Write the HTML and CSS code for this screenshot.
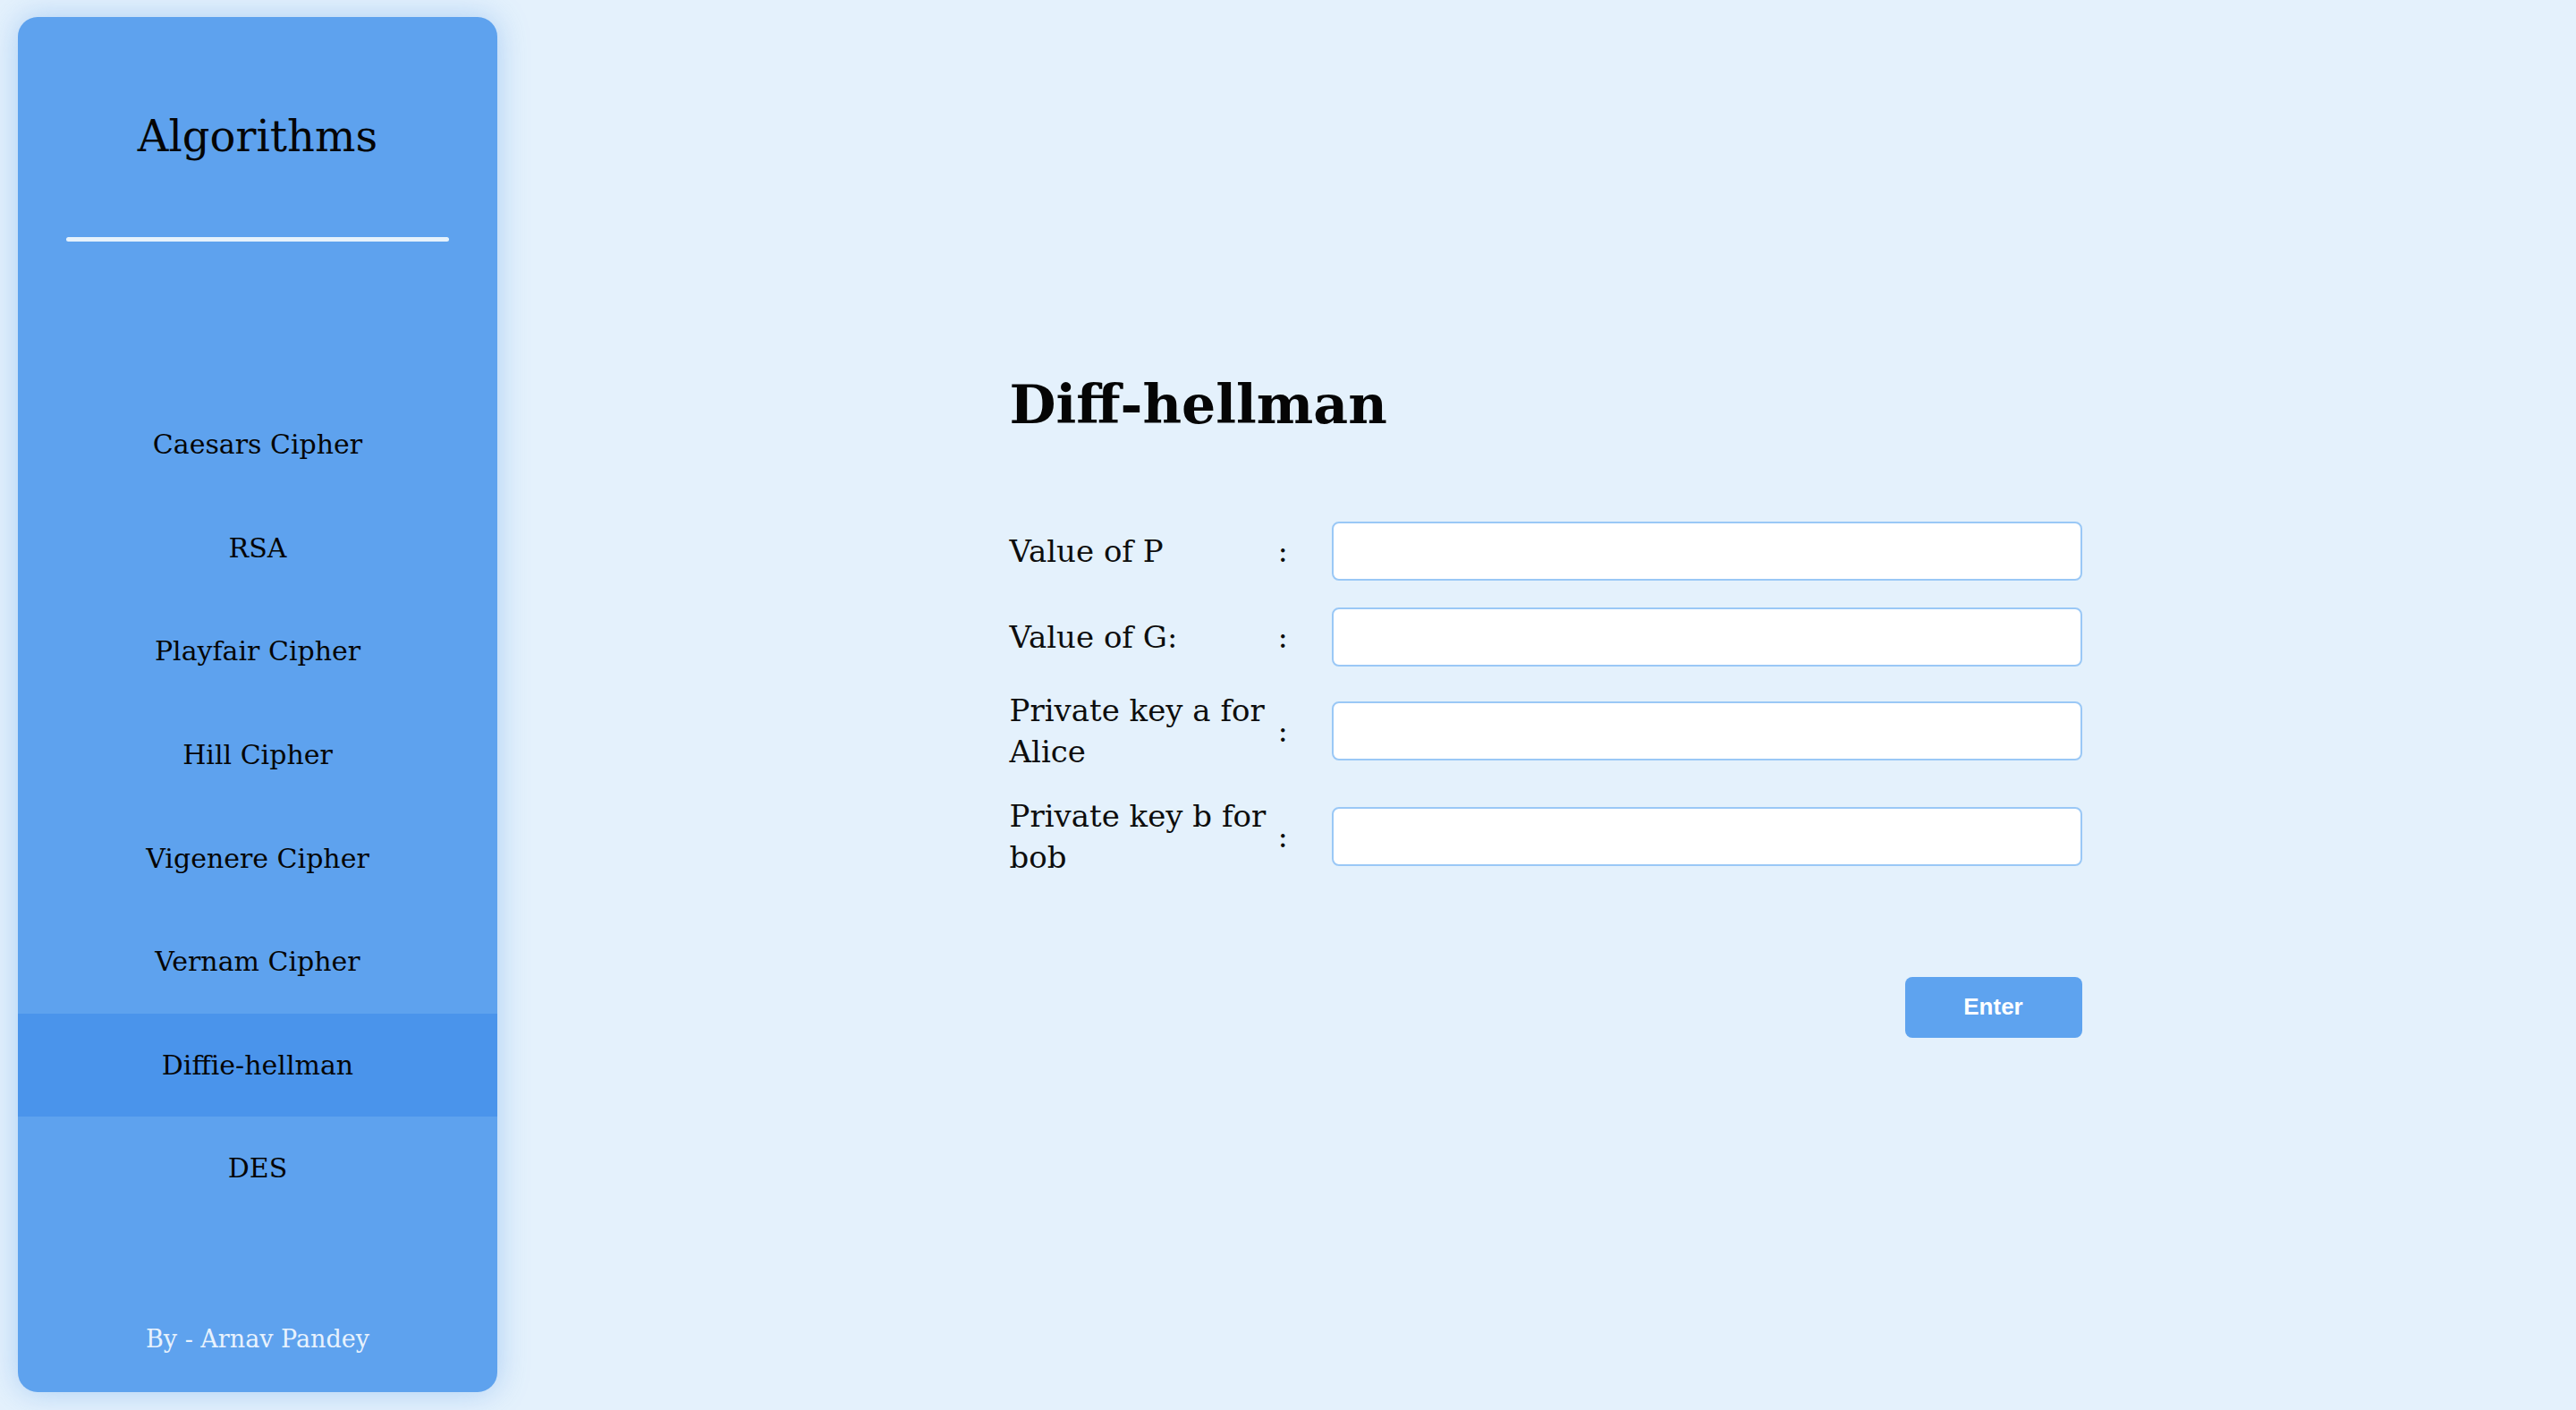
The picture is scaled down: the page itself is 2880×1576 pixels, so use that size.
FILE: index.html
```html
<!DOCTYPE html>
<html lang="en">
<head>
<meta charset="utf-8">
<title>Diff-hellman</title>
<link rel="stylesheet" href="styles.css">
</head>
<body>
<aside class="sidebar">
  <div class="brand">
    <h1 class="brand-title">Algorithms</h1>
    <div class="brand-rule"></div>
  </div>
  <nav class="nav">
    <a class="nav-item" href="#">Caesars Cipher</a>
    <a class="nav-item" href="#">RSA</a>
    <a class="nav-item" href="#">Playfair Cipher</a>
    <a class="nav-item" href="#">Hill Cipher</a>
    <a class="nav-item" href="#">Vigenere Cipher</a>
    <a class="nav-item" href="#">Vernam Cipher</a>
    <a class="nav-item nav-item-active" href="#">Diffie-hellman</a>
    <a class="nav-item" href="#">DES</a>
  </nav>
  <div class="sidebar-footer">By - Arnav Pandey</div>
</aside>
<main class="main">
  <section class="panel">
    <h2 class="panel-title">Diff-hellman</h2>
    <form class="form">
      <div class="form-row">
        <label class="form-label">Value of P</label>
        <span class="form-colon">:</span>
        <input class="form-input" type="text">
      </div>
      <div class="form-row form-row-second">
        <label class="form-label">Value of G:</label>
        <span class="form-colon">:</span>
        <input class="form-input" type="text">
      </div>
      <div class="form-row">
        <label class="form-label">Private key a for Alice</label>
        <span class="form-colon">:</span>
        <input class="form-input" type="text">
      </div>
      <div class="form-row">
        <label class="form-label">Private key b for bob</label>
        <span class="form-colon">:</span>
        <input class="form-input" type="text">
      </div>
      <div class="form-actions">
        <button class="btn" type="button">Enter</button>
      </div>
    </form>
  </section>
</main>
</body>
</html>
```
FILE: styles.css
```css
* { box-sizing: border-box; }

html, body {
  margin: 0;
  height: 100%;
}

body {
  display: flex;
  height: 1576px;
  padding: 19px 20px 20px;
  background: #e4f1fc;
  font-family: "DejaVu Serif", "Liberation Serif", serif;
  color: #0d0d0d;
}

.sidebar {
  width: 536px;
  flex: 0 0 536px;
  height: 100%;
  display: flex;
  flex-direction: column;
  background: #5ea2ee;
  border-radius: 22px;
  box-shadow: 0 0 34px rgba(80, 150, 235, 0.38);
  overflow: hidden;
}

.brand {
  padding-top: 104px;
}

.brand-title {
  margin: 0;
  font-weight: normal;
  font-size: 48px;
  line-height: 58px;
  text-align: center;
  color: #050505;
}

.brand-rule {
  width: 428px;
  height: 5px;
  margin: 84px auto 0;
  border-radius: 3px;
  background: #e6f2fc;
}

.nav {
  margin-top: 169px;
  display: flex;
  flex-direction: column;
}

.nav-item {
  height: 115.6px;
  display: flex;
  align-items: center;
  justify-content: center;
  font-size: 30px;
  color: #050505;
  text-decoration: none;
}

.nav-item-active {
  background: #4a94eb;
}

.sidebar-footer {
  margin-top: auto;
  padding-bottom: 40px;
  font-size: 27px;
  line-height: 38px;
  text-align: center;
  color: #e8f2fd;
}

.main {
  flex: 1;
  display: flex;
  align-items: center;
  justify-content: center;
  padding-left: 40px;
}

.panel {
  width: 1199px;
}

.panel-title {
  margin: 0 0 95px;
  font-size: 60px;
  line-height: 72px;
  font-weight: bold;
  color: #050505;
}

.form {
  display: flex;
  flex-direction: column;
  gap: 26px;
}

.form-row {
  display: grid;
  grid-template-columns: 300px 60px 839px;
  align-items: center;
}

.form-row-second {
  margin-top: 4px;
}

.form-label {
  font-size: 34px;
  line-height: 46px;
  color: #0d0d0d;
}

.form-colon {
  font-size: 34px;
  line-height: 46px;
}

.form-input {
  width: 839px;
  height: 66px;
  border: 2px solid #9ac8f6;
  border-radius: 8px;
  background: #ffffff;
  outline: none;
}

.form-actions {
  display: flex;
  justify-content: flex-end;
  margin-top: 85px;
}

.btn {
  width: 198px;
  height: 68px;
  border: none;
  border-radius: 8px;
  background: #5ea3ef;
  color: #ffffff;
  font-family: "Liberation Sans", Arial, sans-serif;
  font-weight: bold;
  font-size: 26px;
}
```
